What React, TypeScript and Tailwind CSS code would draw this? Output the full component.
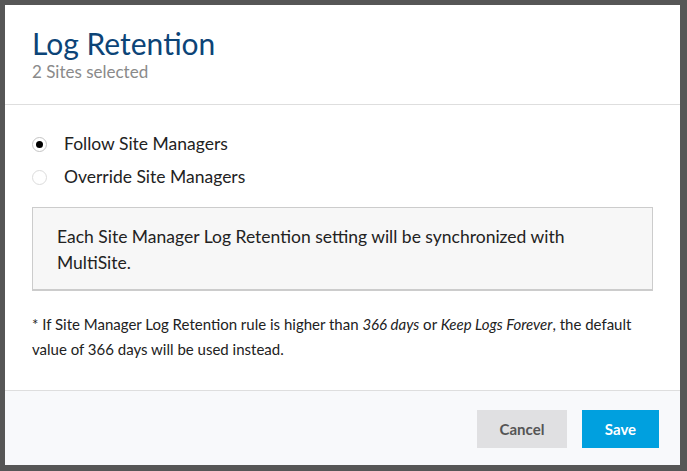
import React from "react";

function Radio({ checked }: { checked: boolean }) {
  return (
    <span
      className={`flex items-center justify-center w-[15px] h-[15px] rounded-full border bg-white ${
        checked ? "border-[#c4c4c4]" : "border-[#dcdcdc]"
      }`}
    >
      {checked && <span className="block w-[7px] h-[7px] rounded-full bg-black" />}
    </span>
  );
}

export default function App() {
  return (
    <div
      className="w-[687px] h-[471px] bg-[#565656] pt-[5px] pl-[5px]"
      style={{ fontFamily: "Lato, 'Liberation Sans', sans-serif" }}
    >
      <div className="w-[675px] h-[460px] bg-white flex flex-col">
        <div className="px-[27px] pt-[21px] pb-[22px] border-b border-[#dedede]">
          <div className="text-[30px] leading-[34px] text-[#0c4477]">Log Retention</div>
          <div className="text-[17px] leading-[20px] text-[#8a8a8a] mt-[2px]">2 Sites selected</div>
        </div>
        <div className="flex-1 px-[27px] pt-[27px]">
          <div className="flex flex-col gap-[9px]">
            <label className="flex items-center gap-[17px] text-[17.5px] leading-[24px] text-[#222]">
              <Radio checked />
              <span>Follow Site Managers</span>
            </label>
            <label className="flex items-center gap-[17px] text-[17.5px] leading-[24px] text-[#222]">
              <Radio checked={false} />
              <span>Override Site Managers</span>
            </label>
          </div>
          <div className="mt-[18px] bg-[#f7f7f7] border border-[#cccccc] border-b-2 pl-[24px] pr-[24px] pt-[16px] pb-[13px] text-[17.5px] leading-[26px] text-[#222]">
            Each Site Manager Log Retention setting will be synchronized with MultiSite.
          </div>
          <p className="mt-[21px] text-[15px] leading-[25px] text-[#222]">
            * If Site Manager Log Retention rule is higher than <i>366 days</i> or <i>Keep Logs Forever</i>, the default value of 366 days will be used instead.
          </p>
        </div>
        <div className="border-t border-[#dedede] bg-[#f8f9fb] h-[75px] flex items-start justify-end gap-[15px] pt-[19px] pr-[21px]">
          <button className="w-[90px] h-[38px] bg-[#e0e0e2] text-[#555] text-[15px] font-bold">Cancel</button>
          <button className="w-[77px] h-[38px] bg-[#00a0df] text-white text-[15px] font-bold">Save</button>
        </div>
      </div>
    </div>
  );
}
